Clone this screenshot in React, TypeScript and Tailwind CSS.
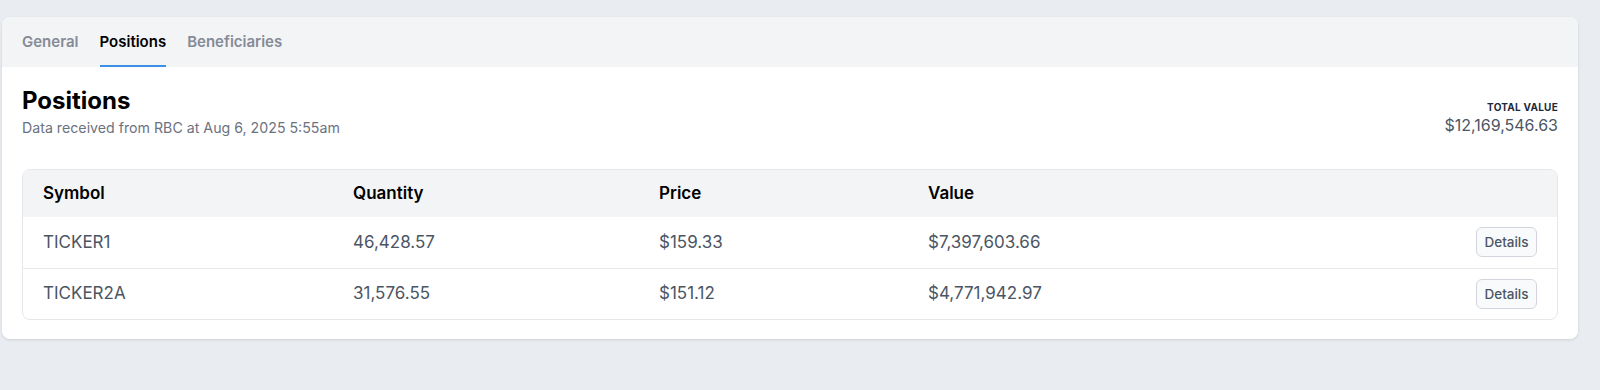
const rows = [
  { symbol: 'TICKER1', quantity: '46,428.57', price: '$159.33', value: '$7,397,603.66' },
  { symbol: 'TICKER2A', quantity: '31,576.55', price: '$151.12', value: '$4,771,942.97' },
]

const tabs = ['General', 'Positions', 'Beneficiaries']

export default function App() {
  return (
    <div
      className="min-h-[390px] w-full bg-[#e9edf1] pt-[17px] pl-[2px] pr-[22px]"
      style={{ fontFamily: 'Inter, "Noto Sans", sans-serif' }}
    >
      <div className="overflow-hidden rounded-lg bg-white shadow-[0_1px_3px_rgba(0,0,0,0.12)]">
        <div className="flex h-[50px] items-stretch gap-[21px] bg-[#f3f4f6] px-5">
          {tabs.map((t) => (
            <div
              key={t}
              className={[
                'flex items-center border-b-2 pt-[2px] text-[15px] font-semibold',
                t === 'Positions' ? 'border-[#3b8fe6] text-black' : 'border-transparent text-[#858b96]',
              ].join(' ')}
            >
              {t}
            </div>
          ))}
        </div>

        <div className="px-5 pt-[18px] pb-[19px]">
          <div className="flex items-start justify-between">
            <div>
              <h1 className="text-2xl leading-8 font-bold text-black">Positions</h1>
              <div className="mt-[1px] text-[14.2px] leading-5 text-[#6b7280]">
                Data received from RBC at Aug 6, 2025 5:55am
              </div>
            </div>
            <div className="pt-[14px] text-right">
              <div className="text-[10px] leading-4 font-bold tracking-wide text-[#1e293b]">TOTAL VALUE</div>
              <div className="text-[16px] leading-5 text-[#4b5563]">$12,169,546.63</div>
            </div>
          </div>

          <div className="mt-[31px] overflow-hidden rounded-lg border border-[#e5e7eb]">
            <table className="w-full table-fixed border-collapse">
              <colgroup>
                <col className="w-[310px]" />
                <col className="w-[306px]" />
                <col className="w-[269px]" />
                <col />
                <col className="w-[120px]" />
              </colgroup>
              <thead>
                <tr className="h-[47px] bg-[#f3f4f6] text-left text-[17px] font-semibold text-black">
                  <th className="px-5 font-semibold">Symbol</th>
                  <th className="px-5 font-semibold">Quantity</th>
                  <th className="px-5 font-semibold">Price</th>
                  <th className="px-5 font-semibold">Value</th>
                  <th className="px-5" />
                </tr>
              </thead>
              <tbody>
                {rows.map((r, i) => (
                  <tr
                    key={r.symbol}
                    className={['h-[51px] text-[17px] text-[#4b5563]', i > 0 ? 'border-t border-[#e5e7eb]' : ''].join(' ')}
                  >
                    <td className="px-5">{r.symbol}</td>
                    <td className="px-5">{r.quantity}</td>
                    <td className="px-5">{r.price}</td>
                    <td className="px-5">{r.value}</td>
                    <td className="px-5 text-right">
                      <button className="h-[30px] w-[61px] rounded-md border border-[#d1d5db] bg-[#f9fafb] text-[13.5px] font-medium text-[#4b5563]">
                        Details
                      </button>
                    </td>
                  </tr>
                ))}
              </tbody>
            </table>
          </div>
        </div>
      </div>
    </div>
  )
}
